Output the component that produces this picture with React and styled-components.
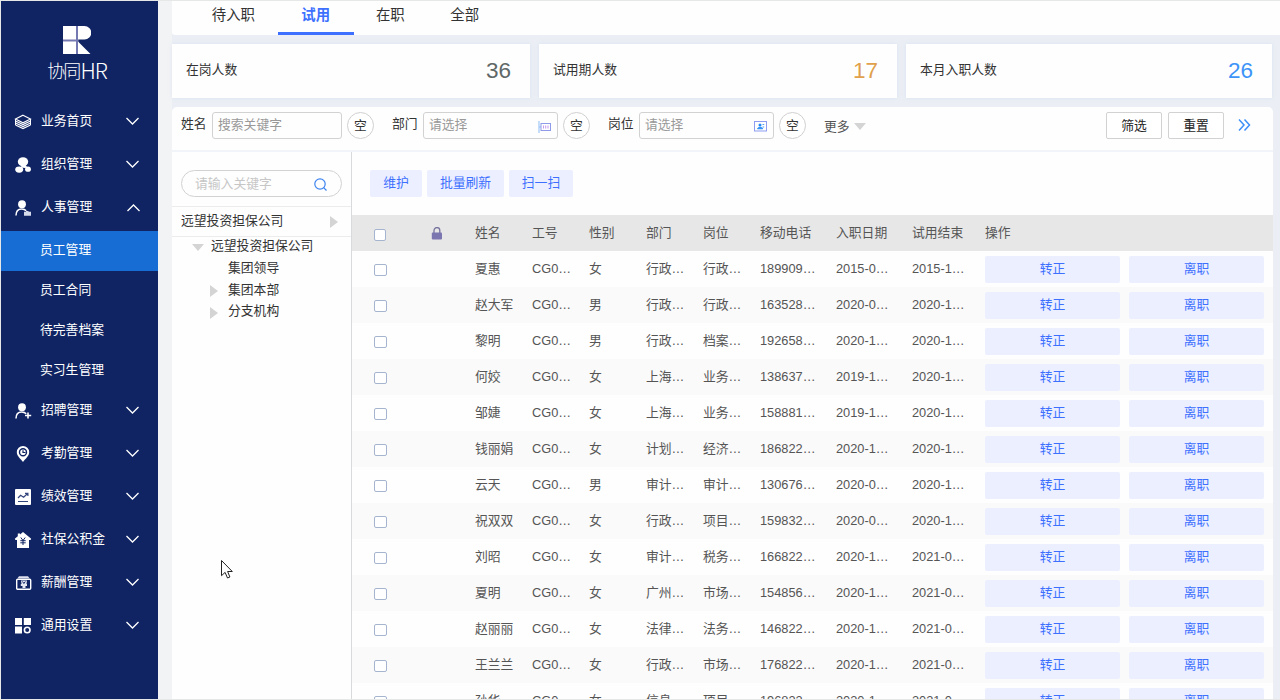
import React from "react";
import styled, { createGlobalStyle } from "styled-components";

const GlobalStyle = createGlobalStyle`
  * {
    box-sizing: border-box;
  }
  body {
    margin: 0;
    overflow: hidden;
    font-family: "Liberation Sans", "Noto Sans CJK SC", sans-serif;
    font-size: 12.8px;
    color: #333;
  }
  button, input {
    font-family: inherit;
    font-size: inherit;
  }
`;

const PageWrapper = styled.div`
  width: 1280px;
  height: 700px;
  display: flex;
  overflow: hidden;
  border: 1px solid #e6e8e8;
  border-right: none;
  background: #f2f3f5;
`;

/* ---------- sidebar ---------- */

const Sidebar = styled.aside`
  width: 157px;
  flex: none;
  background: #102463;
  color: #fff;
`;

const Logo = styled.div`
  height: 101px;
  padding-top: 25px;
  display: flex;
  flex-direction: column;
  align-items: center;
  padding-right: 5px;

  svg {
    display: block;
    flex: none;
    margin-bottom: 3px;
  }
  .name {
    display: flex;
    font-family: "Noto Sans CJK SC", sans-serif;
    font-weight: 300;
    font-size: 18px;
    line-height: 24px;
    letter-spacing: -1.8px;
    white-space: nowrap;
    margin-left: 0;
  }
  .latin {
    font-size: 21.5px;
    letter-spacing: -1px;
    margin-left: 1px;
  }
`;

const MenuItem = styled.div`
  height: 43px;
  padding: 0 19px 8px 14px;
  display: flex;
  align-items: center;

  .icon {
    width: 16px;
    height: 16px;
    margin-right: 10px;
    margin-top: 5px;
    flex: none;
  }
  .label {
    flex: 1;
    white-space: nowrap;
  }
`;

const SubItem = styled.div`
  height: 40px;
  line-height: 38px;
  padding-left: 39px;
  background: ${(props) => (props.$active ? "#176dd3" : "transparent")};
`;

/* ---------- content ---------- */

const Content = styled.main`
  flex: 1;
  margin-left: 14px;
  padding-right: 7px;
  background: #ebeff5;
  display: flex;
  flex-direction: column;
  min-width: 0;
`;

const Tabs = styled.div`
  height: 34px;
  flex: none;
  margin-right: -7px;
  padding-left: 17px;
  display: flex;
  background: #fefefe;
  border-radius: 0 0 0 3px;
`;

const Tab = styled.div`
  height: 34px;
  line-height: 28px;
  padding: 0 ${(props) => (props.$active ? "23.5px" : "22.8px")};
  margin-right: ${(props) => (props.$active ? "-.5px" : "0")};
  font-size: 14.4px;
  font-weight: ${(props) => (props.$active ? 700 : 400)};
  color: ${(props) => (props.$active ? "#3d70ff" : "#333")};
  border-bottom: 3px solid ${(props) => (props.$active ? "#3d70ff" : "transparent")};
`;

const Stats = styled.div`
  margin-top: 9px;
  height: 54px;
  flex: none;
  display: grid;
  grid-template-columns: 358px 358px 366px;
  column-gap: 9px;
`;

const StatCard = styled.div`
  display: flex;
  align-items: center;
  justify-content: space-between;
  padding: 0 19px 1px 14px;
  background: #fefefe;
  box-shadow: 0 0 4px rgba(170, 195, 235, 0.25);

  span {
    padding-bottom: 4px;
  }
  strong {
    font-weight: 400;
    font-size: 22.5px;
    color: ${(props) => props.$color};
  }
`;

const Panel = styled.section`
  margin-top: 9px;
  flex: 1;
  min-height: 0;
  display: flex;
  flex-direction: column;
  background: #fefefe;
  border-radius: 5px 5px 0 0;
`;

const Filters = styled.div`
  height: 45px;
  flex: none;
  display: flex;
  align-items: flex-start;
  padding: 5px 20px 0 9px;
  border-bottom: 2px solid #f1f5f9;
`;

const FilterLabel = styled.label`
  line-height: 24px;
  width: 31px;
  flex: none;
`;

const Field = styled.div`
  width: ${(props) => props.$width}px;
  height: 27px;
  display: flex;
  align-items: center;
  justify-content: space-between;
  padding: 0 6px 4px 5px;
  border: 1px solid #d2d2d2;
  border-radius: 3px;
  color: #999;

  svg {
    margin-top: 6px;
  }
`;

const EmptyButton = styled.button`
  width: 27px;
  height: 27px;
  margin: 0 18px 0 5px;
  padding: 0 0 2px;
  border: 1px solid #d0d0d0;
  border-radius: 50%;
  background: #fff;
  color: #333;
`;

const More = styled.div`
  display: flex;
  align-items: center;
  height: 28px;
  color: #555;
  flex: 1;

  span {
    margin-right: 4px;
    padding-bottom: 2px;
  }
`;

const Triangle = styled.i`
  flex: none;
  width: 0;
  height: 0;
  ${(props) =>
    props.$down
      ? `border: 6px solid transparent; border-top: 7px solid #d4d4d4; border-bottom: none;`
      : `border: 6px solid transparent; border-left: 8px solid #d4d4d4; border-right: none;`}
`;

const ActionButton = styled.button`
  width: 56px;
  height: 27px;
  margin-right: 6px;
  padding: 0 0 3px;
  border: 1px solid #d2d2d2;
  border-radius: 2px;
  background: #fff;
  color: #222;
`;

const Body = styled.div`
  flex: 1;
  min-height: 0;
  display: flex;
`;

/* ---------- company tree ---------- */

const TreePane = styled.div`
  width: 180px;
  flex: none;
  border-right: 1px solid #d9dadb;
`;

const TreeSearch = styled.div`
  width: 161px;
  height: 27px;
  margin: 18px 0 9px 9px;
  padding: 0 14px 0 13px;
  display: flex;
  align-items: center;
  justify-content: space-between;
  border: 1px solid #d2d2d2;
  border-radius: 14px;
  color: #c6c6c6;

  span {
    padding-bottom: 3px;
  }
  svg {
    margin-top: 2px;
  }
`;

const TreeHeader = styled.div`
  height: 31px;
  display: flex;
  align-items: center;
  justify-content: space-between;
  padding: 0 13px 0 9px;
  border-top: 1px solid #ececec;
  border-bottom: 1px solid #ececec;

  span {
    padding-bottom: 5px;
  }
`;

const TreeNode = styled.div`
  height: 21.8px;
  line-height: 18px;
  display: flex;
  padding-left: ${(props) => props.$indent}px;

  .arrow {
    width: ${(props) => props.$gap}px;
    display: flex;
    align-items: center;
    padding-bottom: 1px;
  }
`;

/* ---------- table ---------- */

const TablePane = styled.div`
  flex: 1;
  min-width: 0;
`;

const Toolbar = styled.div`
  height: 63px;
  padding: 18px 0 0 18px;
  display: flex;
  gap: 5px;
`;

const SoftButton = styled.button`
  height: 27px;
  width: ${(props) => props.$width}px;
  padding: 0 0 4px;
  border: none;
  border-radius: 2px;
  background: #ebefff;
  color: #3d70ff;
`;

const TableRow = styled.div`
  height: 36px;
  display: grid;
  grid-template-columns: 57px 44px repeat(5, 57px) 76px 76px 73px 1fr;
  align-items: center;
  padding-left: 22px;
  white-space: nowrap;
  color: #555;
  background: ${(props) => (props.$head ? "#e7e7e7" : props.$striped ? "#fafafa" : "#fefefe")};
`;

const Cell = styled.div`
  height: 36px;
  line-height: 36px;
`;

const Checkbox = styled.div`
  width: ${(props) => (props.$head ? 12 : 13)}px;
  height: 12px;
  margin-top: ${(props) => (props.$head ? 4 : 2)}px;
  border: 1px solid #a5b4cf;
  border-radius: 2px;
  background: #fff;
`;

const RowActions = styled.div`
  display: flex;
  gap: 9px;
  padding-top: 1px;
`;

const Cursor = styled.svg`
  position: absolute;
  left: 220px;
  top: 559px;
`;

const PersonPath = () => (
  <>
    <circle cx="7" cy="4.2" r="3.9" fill="#fff" />
    <path d="M1 15.5c0-4 2.2-6.6 5.8-6.6 2 0 3.4.7 4.4 1.9" fill="none" stroke="#fff" strokeWidth="1.5" />
  </>
);

const icons = {
  layers: (
    <g fill="none" stroke="#fff" strokeWidth="1.1">
      <path d="M8 1.2 15.500 5 8 8.800.5 5Z" />
      <path d="M.5 7 8 10.600 15.500 7M.5 9 8 12.600l7.500-3.600M.5 11 8 14.600l7.500-3.600" />
      <path d="M.5 5v6M15.500 5v6" strokeWidth="1" />
    </g>
  ),
  group: (
    <g fill="#fff">
      <ellipse cx="8" cy="4.8" rx="5.2" ry="4.5" />
      <ellipse cx="4.2" cy="12.6" rx="4" ry="3.1" />
      <ellipse cx="13" cy="12.2" rx="2.9" ry="2.6" />
      <path d="M6.500 8h4l2 2.500-2.500.5-4-.5z" />
    </g>
  ),
  staff: (
    <>
      <PersonPath />
      <path d="M9 11.8h2V11h2.5v.8H16v4H9z" fill="#d5daea" />
    </>
  ),
  recruit: (
    <>
      <PersonPath />
      <path d="M13 9.5v6M10 12.5h6.2" stroke="#fff" strokeWidth="1.6" />
    </>
  ),
  place: (
    <>
      <path d="M8 0a6.2 6.2 0 0 0-6.2 6.2C1.8 10 5.5 12.5 8 16c2.500-3.500 6.200-6 6.200-9.800A6.200 6.200 0 0 0 8 0Z" fill="#fff" />
      <circle cx="8" cy="6.2" r="3.5" fill="none" stroke="#102463" strokeWidth="1.4" />
      <path d="M8 4.200v2.300h2.500" fill="none" stroke="#102463" strokeWidth="1.200" />
    </>
  ),
  chart: (
    <>
      <rect width="16" height="16" rx="1" fill="#fff" />
      <path d="m3 9 2.600-2.700 3 2L12.600 4.500M10 4.300h2.900V7M3 12.500h10" fill="none" stroke="#33457d" strokeWidth="1.200" />
    </>
  ),
  house: (
    <>
      <path d="M8 0 16.200 6.800 15.500 8H14v8H2V8H.5L-.2 6.800 2.800 4.300V1.500H5v1Z" fill="#fff" />
      <path d="m5.800 5.500 2.200 3 2.200-3M5.300 8.700h5.400M5.300 10.800h5.400M8 8.500V13" fill="none" stroke="#102463" strokeWidth="1" />
    </>
  ),
  salary: (
    <>
      <path d="M4 1.300h9l1.500 2H2.500z" fill="#dfe2ee" />
      <rect x="1.700" y="4.200" width="14" height="10" rx="1" fill="none" stroke="#fff" strokeWidth="1.400" />
      <path d="M6 5.500h6l-.5 3.500h.5v2h-1.500v2h-3v-2H5.800V9h.7z" fill="#e6e8f2" />
      <path d="m7.500 6.500 1.400 2 1.400-2" stroke="#102463" fill="none" />
    </>
  ),
  settings: (
    <>
      <path d="M0 0h7v7H0zM8.800 0H16v7H8.800zM0 8.500h7V15.500H0z" fill="#fff" />
      <circle cx="12.200" cy="12" r="2.800" fill="none" stroke="#fff" strokeWidth="1.600" />
    </>
  ),
};

const Chevron = ({ up }) => (
  <svg width="13" height="8" viewBox="0 0 13 8" fill="none" stroke="#fff" strokeWidth="1.3"
    style={{ marginTop: up ? 5 : 3, marginRight: up ? -1 : 0 }}>
    <path d={up ? "M.5 7 6.500 1l6 6" : "M.5 1l6 6 6-6"} />
  </svg>
);

const LockIcon = () => (
  <svg width="12" height="13" viewBox="0 0 12 13" style={{ display: "block" }}>
    <path d="M3 6V3.500a2.900 2.900 0 0 1 5.800 0V6" fill="none" stroke="#77739f" strokeWidth="1.300" />
    <rect x=".8" y="5.500" width="10.200" height="7" rx="1" fill="#7b76b0" />
  </svg>
);

const DeptIcon = () => (
  <svg width="13" height="12" viewBox="0 0 13 12" fill="none">
    <path d="M1 0v12" stroke="#8fbdf5" />
    <path d="M1 6h2" stroke="#8fbdf5" />
    <rect x="3" y="2.500" width="9.500" height="7" stroke="#8f9ae8" />
    <path d="M5.500 4.500v3M7.700 4.500v3M10 4.500v3" stroke="#c39af0" />
  </svg>
);

const PostIcon = () => (
  <svg width="13" height="11" viewBox="0 0 13 11" fill="none">
    <rect x=".5" y=".5" width="12" height="9.500" stroke="#8f9df0" />
    <circle cx="6" cy="4" r="1.500" fill="#2188f5" />
    <path d="M3.500 7.800c.2-2 5-2 5.200 0zM8.500 3.500h1.700M8.500 6h1.700" fill="#2188f5" stroke="#2188f5" strokeWidth=".8" />
  </svg>
);

const menu = [
  { label: "业务首页", icon: "layers" },
  { label: "组织管理", icon: "group" },
  {
    label: "人事管理",
    icon: "staff",
    children: ["员工管理", "员工合同", "待完善档案", "实习生管理"],
  },
  { label: "招聘管理", icon: "recruit" },
  { label: "考勤管理", icon: "place" },
  { label: "绩效管理", icon: "chart" },
  { label: "社保公积金", icon: "house" },
  { label: "薪酬管理", icon: "salary" },
  { label: "通用设置", icon: "settings" },
];

const columns = ["姓名", "工号", "性别", "部门", "岗位", "移动电话", "入职日期", "试用结束"];

const rows = [
  ["夏惠", "CG0…", "女", "行政…", "行政…", "189909…", "2015-0…", "2015-1…"],
  ["赵大军", "CG0…", "男", "行政…", "行政…", "163528…", "2020-0…", "2020-1…"],
  ["黎明", "CG0…", "男", "行政…", "档案…", "192658…", "2020-1…", "2020-1…"],
  ["何姣", "CG0…", "女", "上海…", "业务…", "138637…", "2019-1…", "2020-1…"],
  ["邹婕", "CG0…", "女", "上海…", "业务…", "158881…", "2019-1…", "2020-1…"],
  ["钱丽娟", "CG0…", "女", "计划…", "经济…", "186822…", "2020-1…", "2020-1…"],
  ["云天", "CG0…", "男", "审计…", "审计…", "130676…", "2020-0…", "2020-1…"],
  ["祝双双", "CG0…", "女", "行政…", "项目…", "159832…", "2020-0…", "2020-1…"],
  ["刘昭", "CG0…", "女", "审计…", "税务…", "166822…", "2020-1…", "2021-0…"],
  ["夏明", "CG0…", "女", "广州…", "市场…", "154856…", "2020-1…", "2021-0…"],
  ["赵丽丽", "CG0…", "女", "法律…", "法务…", "146822…", "2020-1…", "2021-0…"],
  ["王兰兰", "CG0…", "女", "行政…", "市场…", "176822…", "2020-1…", "2021-0…"],
  ["孙华", "CG0…", "女", "信息…", "项目…", "196822…", "2020-1…", "2021-0…"],
];

const App = () => {
  return (
    <>
      <GlobalStyle />
      <PageWrapper>
        <Sidebar>
          <Logo>
            <svg width="28" height="29" viewBox="0 0 28 29">
              <path d="M0 0h28v28H0z" fill="#102463" />
              <path d="M0 0h15.500v28H0z" fill="#7478b0" />
              <path d="M0 0h13v13.500H0zM0 15.500h13V28H0zM15 0h6.500a6.700 6.700 0 0 1 0 13.500H15zM15 15.500 27.500 28H15z" fill="#fff" />
            </svg>
            <div className="name">
              协同<span className="latin">HR</span>
            </div>
          </Logo>
          {menu.map((item) => (
            <React.Fragment key={item.label}>
              <MenuItem>
                <svg className="icon" viewBox="0 0 16 16" overflow="visible">
                  {icons[item.icon]}
                </svg>
                <span className="label">{item.label}</span>
                <Chevron up={!!item.children} />
              </MenuItem>
              {item.children &&
                item.children.map((child, i) => (
                  <SubItem key={child} $active={i === 0}>
                    {child}
                  </SubItem>
                ))}
            </React.Fragment>
          ))}
        </Sidebar>

        <Content>
          <Tabs>
            <Tab>待入职</Tab>
            <Tab $active>试用</Tab>
            <Tab>在职</Tab>
            <Tab>全部</Tab>
          </Tabs>

          <Stats>
            <StatCard $color="#606868">
              <span>在岗人数</span>
              <strong>36</strong>
            </StatCard>
            <StatCard $color="#e0a04c">
              <span>试用期人数</span>
              <strong>17</strong>
            </StatCard>
            <StatCard $color="#3d94f8">
              <span>本月入职人数</span>
              <strong>26</strong>
            </StatCard>
          </Stats>

          <Panel>
            <Filters>
              <FilterLabel>姓名</FilterLabel>
              <Field $width={130}>搜索关键字</Field>
              <EmptyButton>空</EmptyButton>
              <FilterLabel>部门</FilterLabel>
              <Field $width={135}>
                请选择
                <DeptIcon />
              </Field>
              <EmptyButton>空</EmptyButton>
              <FilterLabel>岗位</FilterLabel>
              <Field $width={135}>
                请选择
                <PostIcon />
              </Field>
              <EmptyButton>空</EmptyButton>
              <More>
                <span>更多</span>
                <Triangle $down />
              </More>
              <ActionButton>筛选</ActionButton>
              <ActionButton>重置</ActionButton>
              <svg width="13" height="12" viewBox="0 0 13 12" fill="none" stroke="#3d8ff8" strokeWidth="1.5"
                style={{ margin: "7px 2px 0 8px" }}>
                <path d="M1 .5 6 6l-5 5.500M6.500.5 11.500 6l-5 5.500" />
              </svg>
            </Filters>

            <Body>
              <TreePane>
                <TreeSearch>
                  <span>请输入关键字</span>
                  <svg width="13" height="13" viewBox="0 0 13 13" fill="none" stroke="#3d84f0" strokeWidth="1.2">
                    <circle cx="6" cy="6" r="5.200" />
                    <path d="m9.700 9.700 2.800 2.800" />
                  </svg>
                </TreeSearch>
                <TreeHeader>
                  <span>远望投资担保公司</span>
                  <Triangle />
                </TreeHeader>
                <TreeNode $indent={20} $gap={19}>
                  <span className="arrow"><Triangle $down /></span>
                  远望投资担保公司
                </TreeNode>
                <TreeNode $indent={38} $gap={18}>
                  <span className="arrow" />
                  集团领导
                </TreeNode>
                <TreeNode $indent={38} $gap={18}>
                  <span className="arrow"><Triangle /></span>
                  集团本部
                </TreeNode>
                <TreeNode $indent={38} $gap={18}>
                  <span className="arrow"><Triangle /></span>
                  分支机构
                </TreeNode>
              </TreePane>

              <TablePane>
                <Toolbar>
                  <SoftButton $width={52}>维护</SoftButton>
                  <SoftButton $width={77}>批量刷新</SoftButton>
                  <SoftButton $width={64}>扫一扫</SoftButton>
                </Toolbar>
                <TableRow $head>
                  <Checkbox $head />
                  <LockIcon />
                  {columns.map((name) => (
                    <Cell key={name}>{name}</Cell>
                  ))}
                  <Cell>操作</Cell>
                </TableRow>
                {rows.map((row, index) => (
                  <TableRow key={index} $striped={index % 2 === 1}>
                    <Checkbox />
                    <span />
                    {row.map((value, i) => (
                      <Cell key={i}>{value}</Cell>
                    ))}
                    <RowActions>
                      <SoftButton $width={135}>转正</SoftButton>
                      <SoftButton $width={135}>离职</SoftButton>
                    </RowActions>
                  </TableRow>
                ))}
              </TablePane>
            </Body>
          </Panel>
        </Content>
      </PageWrapper>
      <Cursor width="14" height="22" viewBox="0 0 14 22">
        <path d="M1.500 1.500v15.200l3.600-3.300 2.400 5.600 2.400-1-2.300-5.500h4.700z" fill="#fff" stroke="#222" />
      </Cursor>
    </>
  );
};

export default App;
